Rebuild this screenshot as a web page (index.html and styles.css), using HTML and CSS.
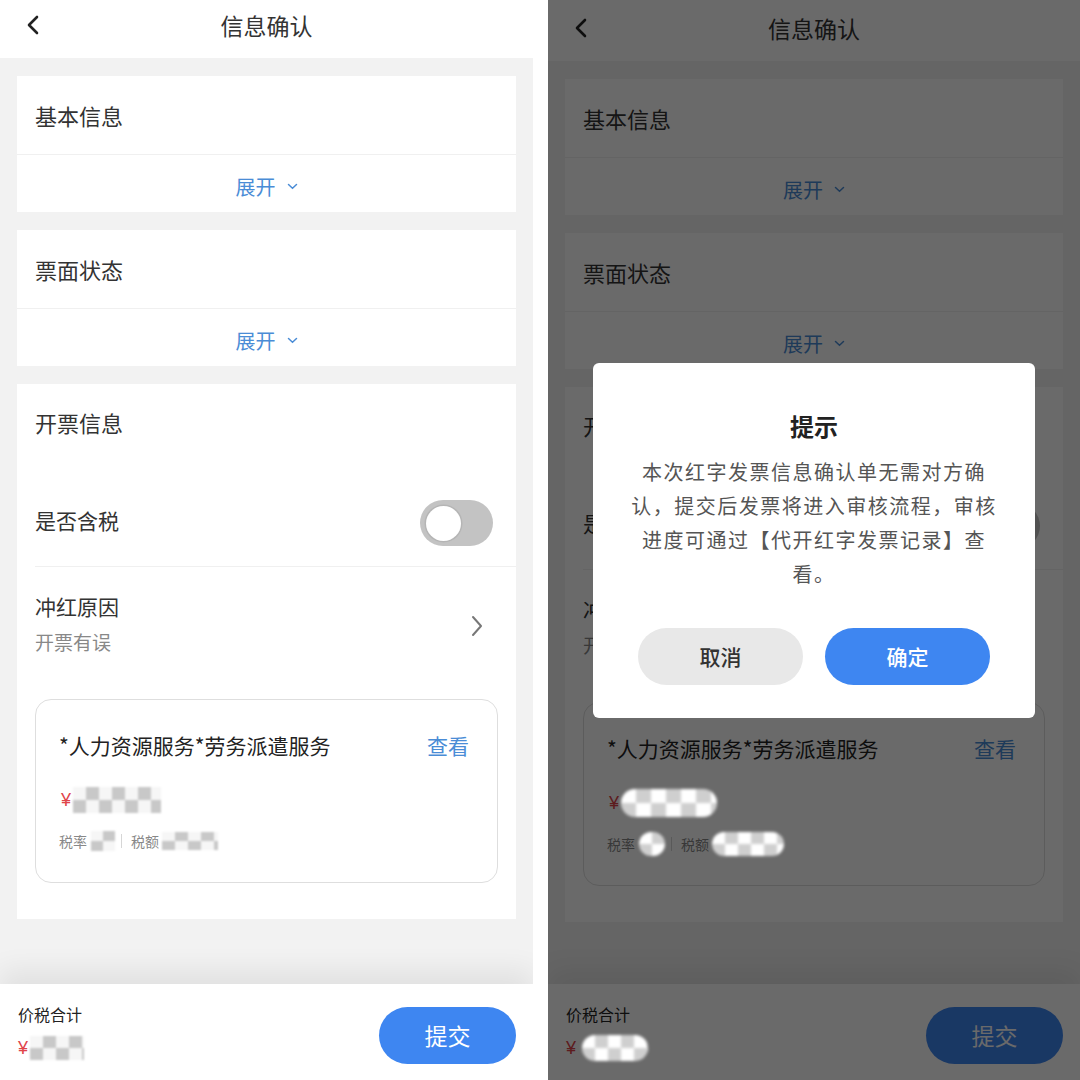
FILE: index.html
```html
<!DOCTYPE html>
<html lang="zh-CN">
<head>
<meta charset="utf-8">
<title>信息确认</title>
<link rel="stylesheet" href="styles.css">
</head>
<body>
<div class="stage">
  <section class="panel">
    <header class="topbar">
      <span class="back"><svg width="14" height="20" viewBox="0 0 14 20"><polyline points="11,2 3,10 11,18" fill="none" stroke="#222" stroke-width="2.6" stroke-linecap="round" stroke-linejoin="round"/></svg></span>
      <h1 class="title">信息确认</h1>
      <span></span>
    </header>
    <main class="content">
      <div class="card">
        <div class="card-title">基本信息</div>
        <div class="expand">展开<svg width="11" height="7" viewBox="0 0 11 7"><polyline points="1.5,1.5 5.5,5.2 9.5,1.5" fill="none" stroke="#4a8cd6" stroke-width="1.5" stroke-linecap="round"/></svg></div>
      </div>
      <div class="card">
        <div class="card-title">票面状态</div>
        <div class="expand">展开<svg width="11" height="7" viewBox="0 0 11 7"><polyline points="1.5,1.5 5.5,5.2 9.5,1.5" fill="none" stroke="#4a8cd6" stroke-width="1.5" stroke-linecap="round"/></svg></div>
      </div>
      <div class="card card-invoice">
        <div class="card-title plain">开票信息</div>
        <div class="row row-switch">
          <span class="label">是否含税</span>
          <span class="switch"><span class="knob"></span></span>
        </div>
        <div class="row row-reason">
          <div>
            <div class="label">冲红原因</div>
            <div class="sub">开票有误</div>
          </div>
          <svg width="14" height="24" viewBox="0 0 14 24"><polyline points="3,3 11,12 3,21" fill="none" stroke="#777" stroke-width="2" stroke-linecap="round" stroke-linejoin="round"/></svg>
        </div>
        <div class="item">
          <div class="item-head"><span class="item-name">*人力资源服务*劳务派遣服务</span><span class="link">查看</span></div>
          <div class="item-amount"><span class="yen">¥</span><span class="mask mask-amt"></span></div>
          <div class="item-tax">税率<span class="mask mask-rate"></span><span class="sep"></span>税额<span class="mask mask-tax"></span></div>
        </div>
      </div>
    </main>
    <footer class="bottombar">
      <div class="total">
        <div class="total-label">价税合计</div>
        <div class="total-amount"><span class="yen">¥</span><span class="mask mask-total"></span></div>
      </div>
      <button class="submit">提交</button>
    </footer>
  </section>

  <section class="panel panel-dim">
    <header class="topbar">
      <span class="back"><svg width="14" height="20" viewBox="0 0 14 20"><polyline points="11,2 3,10 11,18" fill="none" stroke="#222" stroke-width="2.6" stroke-linecap="round" stroke-linejoin="round"/></svg></span>
      <h1 class="title">信息确认</h1>
      <span></span>
    </header>
    <main class="content">
      <div class="card">
        <div class="card-title">基本信息</div>
        <div class="expand">展开<svg width="11" height="7" viewBox="0 0 11 7"><polyline points="1.5,1.5 5.5,5.2 9.5,1.5" fill="none" stroke="#4a8cd6" stroke-width="1.5" stroke-linecap="round"/></svg></div>
      </div>
      <div class="card">
        <div class="card-title">票面状态</div>
        <div class="expand">展开<svg width="11" height="7" viewBox="0 0 11 7"><polyline points="1.5,1.5 5.5,5.2 9.5,1.5" fill="none" stroke="#4a8cd6" stroke-width="1.5" stroke-linecap="round"/></svg></div>
      </div>
      <div class="card card-invoice">
        <div class="card-title plain">开票信息</div>
        <div class="row row-switch">
          <span class="label">是否含税</span>
          <span class="switch"><span class="knob"></span></span>
        </div>
        <div class="row row-reason">
          <div>
            <div class="label">冲红原因</div>
            <div class="sub">开票有误</div>
          </div>
          <svg width="14" height="24" viewBox="0 0 14 24"><polyline points="3,3 11,12 3,21" fill="none" stroke="#777" stroke-width="2" stroke-linecap="round" stroke-linejoin="round"/></svg>
        </div>
        <div class="item">
          <div class="item-head"><span class="item-name">*人力资源服务*劳务派遣服务</span><span class="link">查看</span></div>
          <div class="item-amount"><span class="yen">¥</span><span class="mask mask-amt"></span></div>
          <div class="item-tax">税率<span class="mask mask-rate"></span><span class="sep"></span>税额<span class="mask mask-tax"></span></div>
        </div>
      </div>
    </main>
    <footer class="bottombar">
      <div class="total">
        <div class="total-label">价税合计</div>
        <div class="total-amount"><span class="yen">¥</span><span class="mask mask-total"></span></div>
      </div>
      <button class="submit">提交</button>
    </footer>

    <div class="overlay">
      <div class="dialog">
        <div class="dialog-title">提示</div>
        <p class="dialog-text">本次红字发票信息确认单无需对方确认，提交后发票将进入审核流程，审核进度可通过【代开红字发票记录】查看。</p>
        <div class="dialog-actions">
          <button class="btn btn-cancel">取消</button>
          <button class="btn btn-ok">确定</button>
        </div>
      </div>
    </div>
  </section>
</div>
</body>
</html>
```

FILE: styles.css
```css
* { box-sizing: border-box; }

body {
  margin: 0;
  background: #fff;
  font-family: "Noto Sans CJK SC", "Noto Sans", sans-serif;
  color: #333;
}

.stage {
  display: flex;
  gap: 15px;
  width: 1080px;
  height: 1080px;
  background: #fff;
}

.panel {
  width: 533px;
  height: 1080px;
  flex: none;
  display: flex;
  flex-direction: column;
  background: #f2f2f2;
  position: relative;
  overflow: hidden;
}

.panel-dim { width: 532px; }

/* header */
.topbar {
  flex: none;
  height: 58px;
  padding-bottom: 8px;
  background: #fff;
  display: grid;
  grid-template-columns: 60px 1fr 60px;
  align-items: center;
}

.panel-dim .topbar {
  height: 61px;
  padding-top: 2px;
}

.back {
  display: flex;
  margin-left: 26px;
}

.title {
  margin: 0;
  text-align: center;
  font-size: 23px;
  font-weight: 400;
  line-height: 30px;
  color: #333;
}

/* content */
.content {
  flex: 1;
  padding-top: 18px;
}

.card {
  background: #fff;
  margin: 0 17px 18px;
}

.card-title {
  height: 79px;
  padding-left: 18px;
  display: flex;
  align-items: center;
  font-size: 22px;
  line-height: 30px;
  border-bottom: 1px solid #f0f0f0;
}

.card-title.plain {
  height: 76px;
  border-bottom: none;
}

.expand {
  height: 57px;
  padding-top: 5px;
  display: flex;
  align-items: center;
  justify-content: center;
  gap: 11px;
  color: #4a8cd6;
  font-size: 20px;
}

.card-invoice { padding-bottom: 36px; }

.row {
  margin-left: 18px;
  display: flex;
  align-items: center;
  justify-content: space-between;
}

.label {
  font-size: 21px;
  line-height: 28px;
  color: #333;
}

.row-switch {
  height: 107px;
  padding-top: 14px;
  padding-right: 23px;
  border-bottom: 1px solid #f0f0f0;
}

.switch {
  width: 73px;
  height: 46px;
  margin-top: 6px;
  border-radius: 23px;
  background: #c3c3c3;
  display: flex;
  align-items: center;
  padding-left: 6px;
}

.knob {
  width: 35px;
  height: 35px;
  border-radius: 50%;
  background: #fff;
  box-shadow: 0 0 0 1.5px #b5b5b5;
}

.row-reason {
  padding: 25px 32px 20px 0;
}

.row-reason svg { margin-top: 4px; }

.sub {
  margin-top: 9px;
  font-size: 19px;
  line-height: 26px;
  color: #888;
}

.item {
  margin: 24px 18px 0;
  border: 1px solid #dedede;
  border-radius: 16px;
  padding: 31px 28px 31px 23px;
}

.item-head {
  display: flex;
  justify-content: space-between;
  align-items: center;
  line-height: 28px;
}

.item-name {
  font-size: 21px;
  color: #222;
}

.link {
  font-size: 21px;
  color: #4a8cd6;
}

.item-amount {
  margin-top: 28px;
  height: 26px;
  display: flex;
  align-items: center;
  padding-left: 2px;
}

.yen {
  color: #e0454a;
  font-family: "Liberation Sans", "Noto Sans", sans-serif;
  font-size: 18px;
  line-height: 26px;
  margin-right: 2px;
}

.item-tax {
  margin-top: 18px;
  height: 20px;
  display: flex;
  align-items: center;
  font-size: 14px;
  color: #888;
}

.sep {
  width: 1px;
  height: 14px;
  background: #d6d6d6;
  margin: 0 9px 0 6px;
}

.mask {
  display: inline-block;
  background: repeating-conic-gradient(#c8c8c8 0 25%, #f6f6f6 0 50%) 0 0 / 26px 26px;
  filter: blur(0.8px);
}

.mask-amt { width: 88px; height: 26px; }
.mask-rate { width: 24px; height: 20px; margin-left: 4px; background-size: 24px 20px; }
.mask-tax { width: 56px; height: 18px; margin-left: 3px; background-size: 26px 18px; }
.mask-total { width: 54px; height: 24px; background-size: 26px 24px; }

/* bottom bar */
.bottombar {
  flex: none;
  height: 96px;
  background: #fff;
  display: flex;
  align-items: center;
  justify-content: space-between;
  padding: 0 17px 0 18px;
  box-shadow: 0 -14px 26px rgba(0, 0, 0, 0.07);
  position: relative;
}

.total-label {
  font-size: 16px;
  line-height: 22px;
  color: #222;
  margin-top: 0;
}

.total-amount {
  margin-top: 10px;
  height: 26px;
  display: flex;
  align-items: center;
}

.submit {
  width: 137px;
  height: 57px;
  border: none;
  border-radius: 29px;
  background: #3e86f1;
  color: #fff;
  font-family: inherit;
  font-size: 23px;
  margin-top: 6px;
}

/* dimmed panel with dialog */
.panel-dim .mask {
  position: relative;
  z-index: 6;
  border-radius: 14px;
  background-color: #fff;
  background-image: repeating-conic-gradient(#cfcfcf 0 25%, #fff 0 50%);
  filter: blur(1.4px);
}

.panel-dim .mask-amt { width: 96px; height: 28px; background-size: 30px 28px; }
.panel-dim .mask-rate { width: 26px; height: 24px; background-size: 26px 24px; }
.panel-dim .mask-tax { width: 72px; height: 24px; background-size: 26px 24px; }
.panel-dim .mask-total { width: 66px; height: 26px; background-size: 26px 26px; margin-left: 4px; }

.overlay {
  position: absolute;
  inset: 0;
  z-index: 5;
  background: rgba(0, 0, 0, 0.585);
  display: flex;
  align-items: center;
  justify-content: center;
}

.dialog {
  width: 442px;
  height: 355px;
  background: #fff;
  border-radius: 6px;
  padding: 48px 33px 33px;
  display: flex;
  flex-direction: column;
  align-items: center;
}

.dialog-title {
  font-size: 24px;
  font-weight: 700;
  line-height: 30px;
  color: #222;
}

.dialog-text {
  margin: 14px 0 0;
  width: 376px;
  font-size: 20px;
  letter-spacing: 1.5px;
  line-height: 34.3px;
  text-align: center;
  color: #555;
}

.dialog-actions {
  margin-top: auto;
  display: flex;
  gap: 22px;
}

.btn {
  width: 165px;
  height: 57px;
  border: none;
  border-radius: 29px;
  font-family: inherit;
  font-size: 21px;
  font-weight: 500;
  display: flex;
  align-items: center;
  justify-content: center;
}

.btn-cancel {
  background: #e8e8e8;
  color: #333;
}

.btn-ok {
  background: #3e86f1;
  color: #fff;
}
```
